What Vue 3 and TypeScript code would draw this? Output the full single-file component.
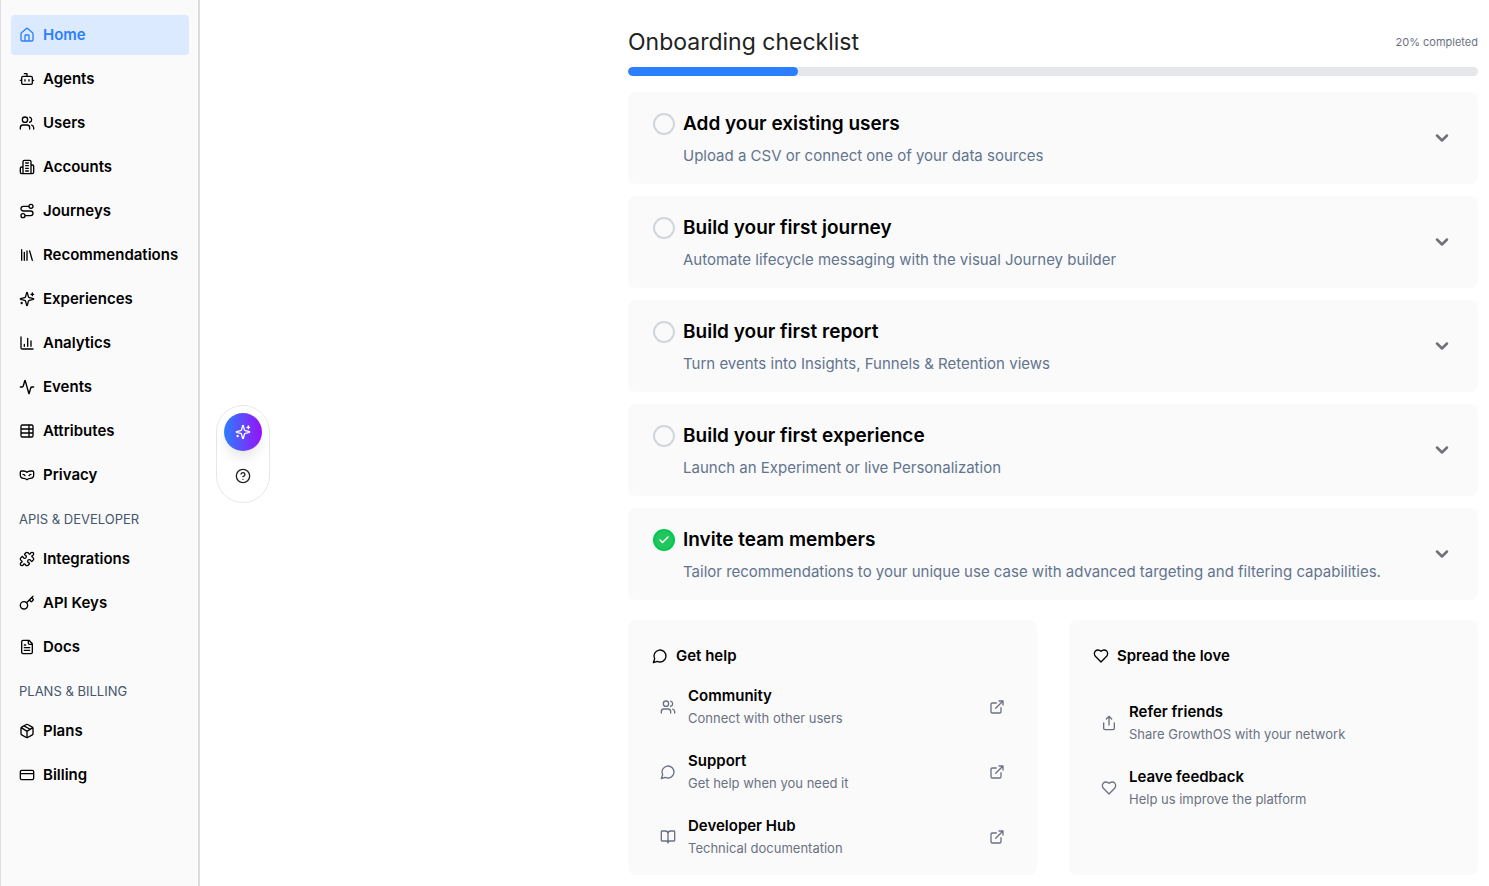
<script setup lang="ts">
interface NavItem {
  label: string
  icon: string
  active?: boolean
}
interface NavGroup {
  title?: string
  items: NavItem[]
}
interface Step {
  title: string
  text: string
  done: boolean
}
interface Resource {
  title: string
  text: string
  icon: string
}

const icons: Record<string, string> = {
  home: 'M15 21v-8a1 1 0 0 0-1-1h-4a1 1 0 0 0-1 1v8M3 10a2 2 0 0 1 .709-1.528l7-5.999a2 2 0 0 1 2.582 0l7 5.999A2 2 0 0 1 21 10v9a2 2 0 0 1-2 2H5a2 2 0 0 1-2-2z',
  bot: 'M12 8V4H8M6 8h12a2 2 0 0 1 2 2v8a2 2 0 0 1-2 2H6a2 2 0 0 1-2-2v-8a2 2 0 0 1 2-2zM2 14h2M20 14h2M15 13v2M9 13v2',
  users: 'M16 21v-2a4 4 0 0 0-4-4H6a4 4 0 0 0-4 4v2M5 7a4 4 0 1 0 8 0a4 4 0 1 0-8 0M22 21v-2a4 4 0 0 0-3-3.87M16 3.13a4 4 0 0 1 0 7.75',
  building: 'M6 22V4a2 2 0 0 1 2-2h8a2 2 0 0 1 2 2v18ZM6 12H4a2 2 0 0 0-2 2v6a2 2 0 0 0 2 2h2M18 9h2a2 2 0 0 1 2 2v9a2 2 0 0 1-2 2h-2M10 6h4M10 10h4M10 14h4M10 18h4',
  route: 'M3 19a3 3 0 1 0 6 0a3 3 0 1 0-6 0M9 19h8.5a3.5 3.5 0 0 0 0-7h-11a3.5 3.5 0 0 1 0-7H15M15 5a3 3 0 1 0 6 0a3 3 0 1 0-6 0',
  library: 'm16 6 4 14M12 6v14M8 8v12M4 4v16',
  sparkles: 'M9.937 15.5A2 2 0 0 0 8.5 14.063l-6.135-1.582a.5.5 0 0 1 0-.962L8.5 9.936A2 2 0 0 0 9.937 8.5l1.582-6.135a.5.5 0 0 1 .963 0L14.063 8.5A2 2 0 0 0 15.5 9.937l6.135 1.581a.5.5 0 0 1 0 .964L15.5 14.063a2 2 0 0 0-1.437 1.437l-1.582 6.135a.5.5 0 0 1-.963 0zM20 3v4M22 5h-4M4 17v2M5 18H3',
  chart: 'M3 3v16a2 2 0 0 0 2 2h16M18 17V9M13 17V5M8 17v-3',
  activity: 'M22 12h-2.48a2 2 0 0 0-1.93 1.46l-2.35 8.36a.25.25 0 0 1-.48 0L9.24 2.18a.25.25 0 0 0-.48 0l-2.35 8.36A2 2 0 0 1 4.49 12H2',
  table: 'M15 3v18M5 3h14a2 2 0 0 1 2 2v14a2 2 0 0 1-2 2H5a2 2 0 0 1-2-2V5a2 2 0 0 1 2-2zM21 9H3M21 15H3',
  mask: 'M18 11c-1.5 0-2.5.5-3 2M4 6a2 2 0 0 0-2 2v4a5 5 0 0 0 5 5 8 8 0 0 1 5 2 8 8 0 0 1 5-2 5 5 0 0 0 5-5V8a2 2 0 0 0-2-2h-3a8 8 0 0 0-5 2 8 8 0 0 0-5-2zM6 11c1.5 0 2.5.5 3 2',
  puzzle: 'M15.39 4.39a1 1 0 0 0 1.68-.474 2.5 2.5 0 1 1 3.014 3.015 1 1 0 0 0-.474 1.68l1.683 1.682a2.414 2.414 0 0 1 0 3.414L19.61 15.39a1 1 0 0 1-1.68-.474 2.5 2.5 0 1 0-3.014 3.015 1 1 0 0 1 .474 1.68l-1.683 1.682a2.414 2.414 0 0 1-3.414 0L8.61 19.61a1 1 0 0 0-1.68.474 2.5 2.5 0 1 1-3.014-3.015 1 1 0 0 0 .474-1.68l-1.683-1.682a2.414 2.414 0 0 1 0-3.414L4.39 8.61a1 1 0 0 1 1.68.474 2.5 2.5 0 1 0 3.014-3.015 1 1 0 0 1-.474-1.68l1.683-1.682a2.414 2.414 0 0 1 3.414 0z',
  key: 'm15.5 7.5 2.3 2.3a1 1 0 0 0 1.4 0l2.1-2.1a1 1 0 0 0 0-1.4L19 4M21 2l-9.6 9.6M2 15.5a5.5 5.5 0 1 0 11 0a5.5 5.5 0 1 0-11 0',
  file: 'M15 2H6a2 2 0 0 0-2 2v16a2 2 0 0 0 2 2h12a2 2 0 0 0 2-2V7ZM14 2v4a2 2 0 0 0 2 2h4M10 9H8M16 13H8M16 17H8',
  box: 'M11 21.73a2 2 0 0 0 2 0l7-4A2 2 0 0 0 21 16V8a2 2 0 0 0-1-1.73l-7-4a2 2 0 0 0-2 0l-7 4A2 2 0 0 0 3 8v8a2 2 0 0 0 1 1.73zM12 22V12M3.3 7l7.703 4.734a2 2 0 0 0 1.994 0L20.7 7M7.5 4.27l9 5.15',
  card: 'M4 5h16a2 2 0 0 1 2 2v10a2 2 0 0 1-2 2H4a2 2 0 0 1-2-2V7a2 2 0 0 1 2-2zM2 10h20',
  message: 'M7.9 20A9 9 0 1 0 4 16.1L2 22Z',
  book: 'M12 7v14M3 18a1 1 0 0 1-1-1V4a1 1 0 0 1 1-1h5a4 4 0 0 1 4 4 4 4 0 0 1 4-4h5a1 1 0 0 1 1 1v13a1 1 0 0 1-1 1h-6a3 3 0 0 0-3 3 3 3 0 0 0-3-3z',
  external: 'M15 3h6v6M10 14 21 3M18 13v6a2 2 0 0 1-2 2H5a2 2 0 0 1-2-2V8a2 2 0 0 1 2-2h6',
  share: 'M4 12v8a2 2 0 0 0 2 2h12a2 2 0 0 0 2-2v-8M16 6l-4-4-4 4M12 2v13',
  heart: 'M19 14c1.49-1.46 3-3.21 3-5.5A5.5 5.5 0 0 0 16.5 3c-1.76 0-3 .5-4.5 2-1.5-1.5-2.74-2-4.5-2A5.5 5.5 0 0 0 2 8.5c0 2.3 1.5 4.05 3 5.5l7 7Z',
  help: 'M2 12a10 10 0 1 0 20 0a10 10 0 1 0-20 0M9.09 9a3 3 0 0 1 5.83 1c0 2-3 3-3 3M12 17h.01',
  chevron: 'm6 9 6 6 6-6',
  check: 'M20 6 9 17l-5-5',
}

const groups: NavGroup[] = [
  {
    items: [
      { label: 'Home', icon: 'home', active: true },
      { label: 'Agents', icon: 'bot' },
      { label: 'Users', icon: 'users' },
      { label: 'Accounts', icon: 'building' },
      { label: 'Journeys', icon: 'route' },
      { label: 'Recommendations', icon: 'library' },
      { label: 'Experiences', icon: 'sparkles' },
      { label: 'Analytics', icon: 'chart' },
      { label: 'Events', icon: 'activity' },
      { label: 'Attributes', icon: 'table' },
      { label: 'Privacy', icon: 'mask' },
    ],
  },
  {
    title: 'APIS & DEVELOPER',
    items: [
      { label: 'Integrations', icon: 'puzzle' },
      { label: 'API Keys', icon: 'key' },
      { label: 'Docs', icon: 'file' },
    ],
  },
  {
    title: 'PLANS & BILLING',
    items: [
      { label: 'Plans', icon: 'box' },
      { label: 'Billing', icon: 'card' },
    ],
  },
]

const steps: Step[] = [
  { title: 'Add your existing users', text: 'Upload a CSV or connect one of your data sources', done: false },
  { title: 'Build your first journey', text: 'Automate lifecycle messaging with the visual Journey builder', done: false },
  { title: 'Build your first report', text: 'Turn events into Insights, Funnels & Retention views', done: false },
  { title: 'Build your first experience', text: 'Launch an Experiment or live Personalization', done: false },
  { title: 'Invite team members', text: 'Tailor recommendations to your unique use case with advanced targeting and filtering capabilities.', done: true },
]

const progress = Math.round((steps.filter((s) => s.done).length / steps.length) * 100)

const help: Resource[] = [
  { title: 'Community', text: 'Connect with other users', icon: 'users' },
  { title: 'Support', text: 'Get help when you need it', icon: 'message' },
  { title: 'Developer Hub', text: 'Technical documentation', icon: 'book' },
]
const love: Resource[] = [
  { title: 'Refer friends', text: 'Share GrowthOS with your network', icon: 'share' },
  { title: 'Leave feedback', text: 'Help us improve the platform', icon: 'heart' },
]
</script>

<template>
  <div class="app">
    <nav class="sidebar" aria-label="Main">
      <template v-for="(group, i) in groups" :key="i">
        <div v-if="group.title" class="group-title">{{ group.title }}</div>
        <a
          v-for="item in group.items"
          :key="item.label"
          href="#"
          class="nav-item"
          :class="{ active: item.active }"
        >
          <svg class="icon" viewBox="0 0 24 24" aria-hidden="true"><path :d="icons[item.icon]" /></svg>
          <span>{{ item.label }}</span>
        </a>
      </template>
    </nav>

    <div class="dock">
      <button type="button" class="dock-ai" aria-label="Assistant">
        <svg class="icon" viewBox="0 0 24 24" aria-hidden="true"><path :d="icons.sparkles" /></svg>
      </button>
      <button type="button" class="dock-help" aria-label="Help">
        <svg class="icon" viewBox="0 0 24 24" aria-hidden="true"><path :d="icons.help" /></svg>
      </button>
    </div>

    <main class="main">
      <div class="content">
        <header class="head">
          <h1>Onboarding checklist</h1>
          <span class="percent">{{ progress }}% completed</span>
        </header>
        <div class="bar" role="progressbar" aria-label="Onboarding progress" :aria-valuenow="progress" aria-valuemin="0" aria-valuemax="100">
          <div class="bar-fill" :style="{ width: progress + '%' }"></div>
        </div>

        <div class="steps">
          <button v-for="step in steps" :key="step.title" type="button" class="step" aria-expanded="false">
            <span class="step-body">
              <span class="step-title">
                <span class="mark" :class="{ done: step.done }">
                  <svg v-if="step.done" class="tick" viewBox="0 0 24 24" aria-hidden="true"><path :d="icons.check" /></svg>
                </span>
                {{ step.title }}
              </span>
              <span class="step-text">{{ step.text }}</span>
            </span>
            <svg class="icon chevron" viewBox="0 0 24 24" aria-hidden="true"><path :d="icons.chevron" /></svg>
          </button>
        </div>

        <div class="panels">
          <section class="panel">
            <h2>
              <svg class="icon" viewBox="0 0 24 24" aria-hidden="true"><path :d="icons.message" /></svg>
              Get help
            </h2>
            <div class="links">
              <a v-for="item in help" :key="item.title" href="#" class="link">
                <svg class="icon" viewBox="0 0 24 24" aria-hidden="true"><path :d="icons[item.icon]" /></svg>
                <span class="link-body">
                  <span class="link-title">{{ item.title }}</span>
                  <span class="link-text">{{ item.text }}</span>
                </span>
                <svg class="icon" viewBox="0 0 24 24" aria-hidden="true"><path :d="icons.external" /></svg>
              </a>
            </div>
          </section>
          <section class="panel">
            <h2>
              <svg class="icon" viewBox="0 0 24 24" aria-hidden="true"><path :d="icons.heart" /></svg>
              Spread the love
            </h2>
            <div class="links spaced">
              <a v-for="item in love" :key="item.title" href="#" class="link">
                <svg class="icon" viewBox="0 0 24 24" aria-hidden="true"><path :d="icons[item.icon]" /></svg>
                <span class="link-body">
                  <span class="link-title">{{ item.title }}</span>
                  <span class="link-text">{{ item.text }}</span>
                </span>
              </a>
            </div>
          </section>
        </div>
      </div>
    </main>
  </div>
</template>

<style>
body {
  background: #fff;
}
</style>

<style scoped>
.app,
.app * {
  box-sizing: border-box;
}
.app {
  display: flex;
  min-height: 100vh;
  font-family: Inter, 'Liberation Sans', sans-serif;
  font-size: 15px;
  line-height: 24px;
  color: #000;
}
a {
  color: inherit;
  text-decoration: none;
}
button {
  font: inherit;
  color: inherit;
  border: 0;
  padding: 0;
  background: none;
  cursor: pointer;
}
h1,
h2 {
  margin: 0;
}
.icon {
  flex: none;
  width: 16px;
  height: 16px;
  fill: none;
  stroke: currentColor;
  stroke-width: 2;
  stroke-linecap: round;
  stroke-linejoin: round;
}
.sidebar {
  flex: none;
  width: 200px;
  display: flex;
  flex-direction: column;
  gap: 4px;
  padding: 15px 9px 15px 10px;
  background: #fafafa;
  border-left: 1px solid #dcdfe4;
  border-right: 2px solid #dcdcde;
}
.nav-item {
  display: flex;
  align-items: center;
  gap: 8px;
  height: 40px;
  padding: 0 8px;
  border-radius: 4px;
  font-weight: 600;
  white-space: nowrap;
}
.nav-item.active {
  background: #dbeafe;
  color: #2b7fff;
}
.group-title {
  padding: 10px 8px 6px;
  font-size: 13px;
  line-height: 20px;
  color: #45556c;
  white-space: nowrap;
}
.dock {
  position: fixed;
  left: 216px;
  top: 405px;
  display: flex;
  flex-direction: column;
  align-items: center;
  gap: 6px;
  padding: 7px;
  background: #fff;
  border: 1px solid #e5e7eb;
  border-radius: 27px;
}
.dock-ai,
.dock-help {
  display: flex;
  align-items: center;
  justify-content: center;
  width: 38px;
  height: 38px;
  border-radius: 50%;
}
.dock-help {
  color: #222;
}
.dock-ai {
  color: #fff;
  background: linear-gradient(90deg, #2b7fff, #9810fa);
  box-shadow: 0 8px 14px -3px rgba(0, 0, 0, 0.12);
}
.main {
  flex: 1;
  min-width: 0;
  display: flex;
  justify-content: flex-end;
  padding: 26px 11px 11px;
}
.content {
  width: 100%;
  max-width: 850px;
}
.head {
  display: flex;
  align-items: center;
  justify-content: space-between;
}
h1 {
  font-size: 23px;
  line-height: 32px;
  font-weight: 400;
  color: #222;
}
.percent {
  font-size: 11px;
  line-height: 16px;
  color: #6b7280;
}
.bar {
  height: 9px;
  margin: 9px 0 16px;
  border-radius: 5px;
  background: #e5e7eb;
  overflow: hidden;
}
.bar-fill {
  height: 100%;
  border-radius: 5px;
  background: #2b7fff;
}
.steps {
  display: flex;
  flex-direction: column;
  gap: 12px;
}
.step {
  display: flex;
  align-items: center;
  justify-content: space-between;
  padding: 16px 26px 16px 25px;
  border-radius: 8px;
  background: #fafafa;
  text-align: left;
}
.step-body {
  display: flex;
  flex-direction: column;
  gap: 4px;
}
.step-title {
  display: flex;
  align-items: center;
  gap: 8px;
  font-size: 19px;
  line-height: 32px;
  font-weight: 600;
}
.mark {
  display: flex;
  align-items: center;
  justify-content: center;
  width: 22px;
  height: 22px;
  border: 2px solid #d1d5dc;
  border-radius: 50%;
}
.mark.done {
  border-color: #00c950;
  background: #22c55e;
}
.tick {
  width: 12px;
  height: 12px;
  fill: none;
  stroke: #fff;
  stroke-width: 3;
  stroke-linecap: round;
  stroke-linejoin: round;
}
.step-text {
  padding-left: 30px;
  color: #62748e;
}
.chevron {
  width: 20px;
  height: 20px;
  stroke-width: 3;
  color: #71717a;
}
.panels {
  display: grid;
  grid-template-columns: 1fr 1fr;
  gap: 32px;
  margin-top: 20px;
}
.panel {
  padding: 24px 24px 7px;
  border-radius: 8px;
  background: #fafafa;
}
.panel h2 {
  display: flex;
  align-items: center;
  gap: 8px;
  font-size: 15px;
  line-height: 24px;
  font-weight: 600;
}
.links {
  display: flex;
  flex-direction: column;
  gap: 3px;
  margin-top: 8px;
}
.links.spaced {
  margin-top: 24px;
}
.link {
  display: flex;
  align-items: center;
  gap: 12px;
  padding: 8px;
  color: #6a7282;
}
.link-body {
  flex: 1;
  display: flex;
  flex-direction: column;
  min-height: 46px;
}
.link-title {
  font-weight: 600;
  color: #000;
}
.link-text {
  font-size: 13px;
  line-height: 20px;
}
</style>
